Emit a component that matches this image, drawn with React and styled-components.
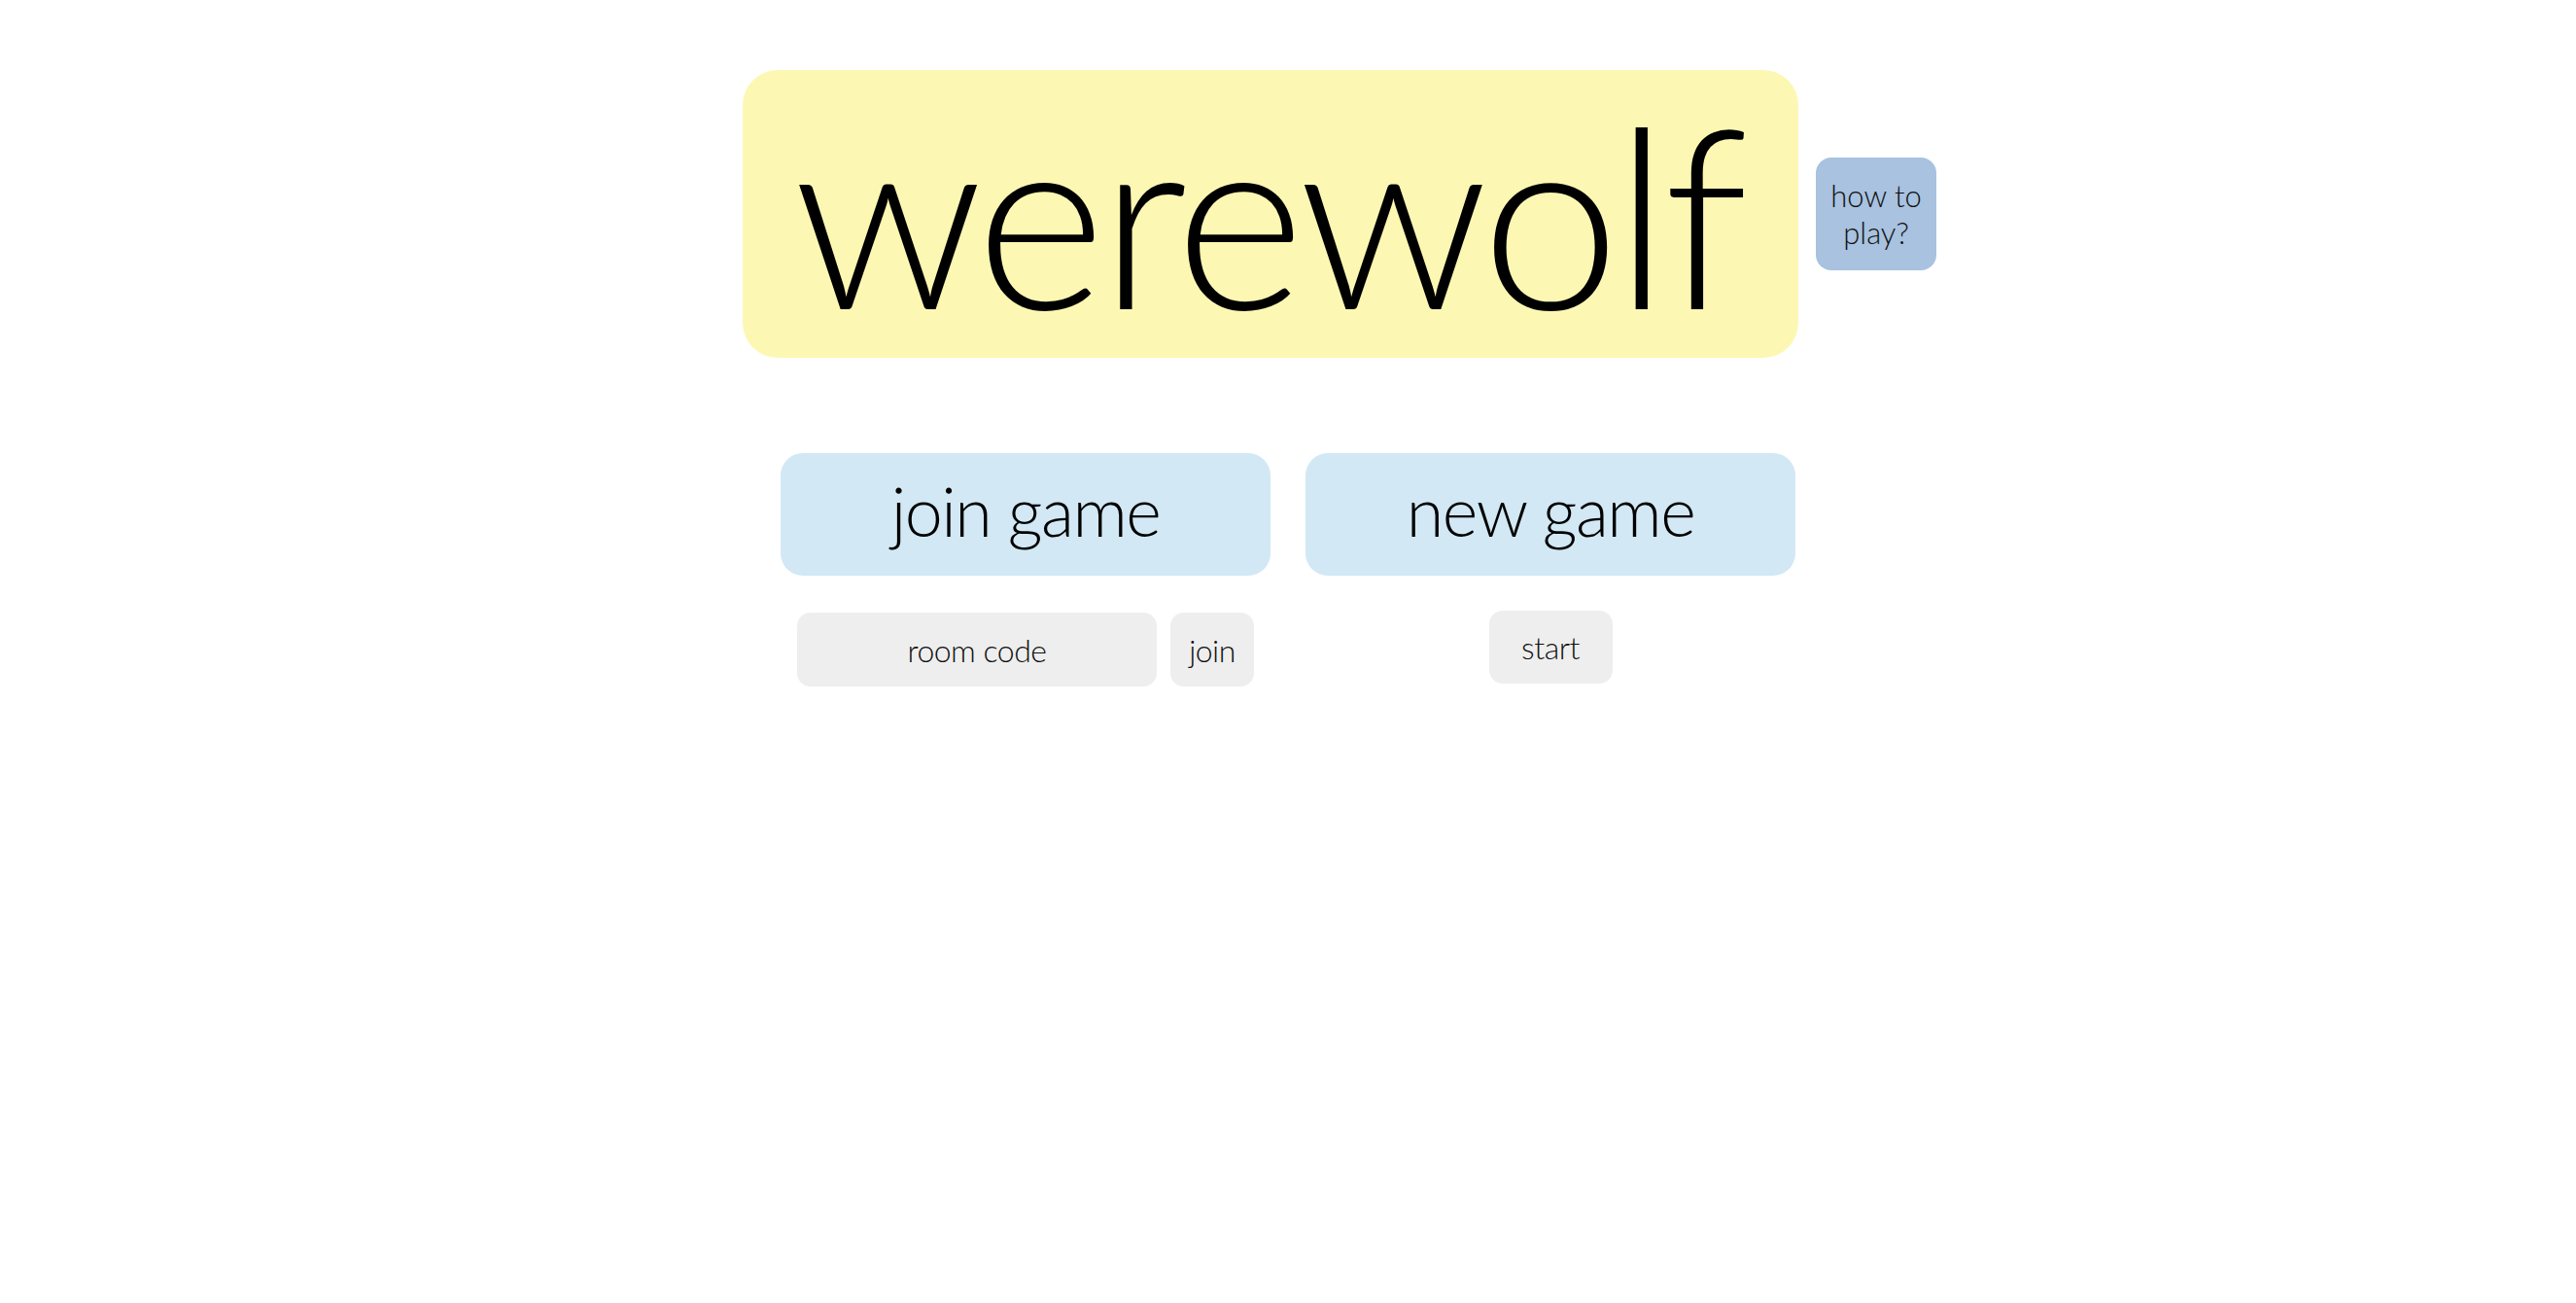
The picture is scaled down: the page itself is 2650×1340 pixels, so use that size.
import React from "react";
import styled, { createGlobalStyle } from "styled-components";

const GlobalStyle = createGlobalStyle`
  html, body {
    margin: 0;
    padding: 0;
    background: #ffffff;
  }
  body {
    font-family: Lato, "Open Sans", sans-serif;
    font-weight: 300;
    color: #000;
  }
`;

const Page = styled.main`
  display: flex;
  flex-direction: column;
  align-items: center;
  padding-top: 72px;
  min-height: 1340px;
  box-sizing: border-box;
`;

const Header = styled.header`
  display: grid;
  grid-template-columns: 1fr 1086px 1fr;
  align-items: center;
  width: 100%;
  padding-right: 36px;
  box-sizing: border-box;
`;

const TitleBox = styled.h1`
  grid-column: 2;
  margin: 0;
  height: 296px;
  border-radius: 36px;
  background: #fcf8b3;
  display: flex;
  align-items: center;
  justify-content: center;
  font-size: 256px;
  font-weight: 300;
  letter-spacing: -6px;
  text-indent: -6px;
  line-height: 1;
  padding-bottom: 2px;
  box-sizing: border-box;
`;

const HowTo = styled.button`
  grid-column: 3;
  justify-self: start;
  margin-left: 18px;
  width: 124px;
  height: 116px;
  border: none;
  border-radius: 16px;
  background: #a8c2e0;
  font-family: inherit;
  font-weight: 300;
  font-size: 31px;
  line-height: 38px;
  color: #111;
  padding: 0 10px;
`;

const Columns = styled.section`
  display: grid;
  grid-template-columns: 504px 504px;
  column-gap: 36px;
  margin-top: 98px;
`;

const Column = styled.div`
  display: flex;
  flex-direction: column;
  align-items: center;
  gap: ${(p) => p.$gap}px;
`;

const BigButton = styled.button`
  width: 100%;
  height: 126px;
  border: none;
  border-radius: 23px;
  background: #d2e8f4;
  font-family: inherit;
  font-weight: 300;
  font-size: 70px;
  letter-spacing: -1.5px;
  color: #000;
  padding: 0 0 8px;
`;

const Controls = styled.div`
  display: flex;
  gap: 14px;
`;

const Field = styled.input`
  width: 370px;
  height: 76px;
  border: none;
  border-radius: 14px;
  background: #eeeeee;
  font-family: inherit;
  font-weight: 300;
  font-size: 32px;
  letter-spacing: -0.5px;
  text-align: center;
  color: #000;
  outline: none;
  box-sizing: border-box;
  &::placeholder {
    color: #111;
    opacity: 1;
  }
`;

const SmallButton = styled.button`
  width: ${(p) => p.$w}px;
  height: ${(p) => p.$h}px;
  border: none;
  border-radius: 14px;
  background: #eeeeee;
  font-family: inherit;
  font-weight: 300;
  font-size: 32px;
  letter-spacing: -0.5px;
  color: #111;
  padding: 0;
`;

export default function App() {
  return (
    <>
      <GlobalStyle />
      <Page>
        <Header>
          <TitleBox>werewolf</TitleBox>
          <HowTo>how to play?</HowTo>
        </Header>
        <Columns>
          <Column $gap={38}>
            <BigButton>join game</BigButton>
            <Controls>
              <Field placeholder="room code" />
              <SmallButton $w={86} $h={76}>join</SmallButton>
            </Controls>
          </Column>
          <Column $gap={36}>
            <BigButton>new game</BigButton>
            <Controls>
              <SmallButton $w={127} $h={75}>start</SmallButton>
            </Controls>
          </Column>
        </Columns>
      </Page>
    </>
  );
}
